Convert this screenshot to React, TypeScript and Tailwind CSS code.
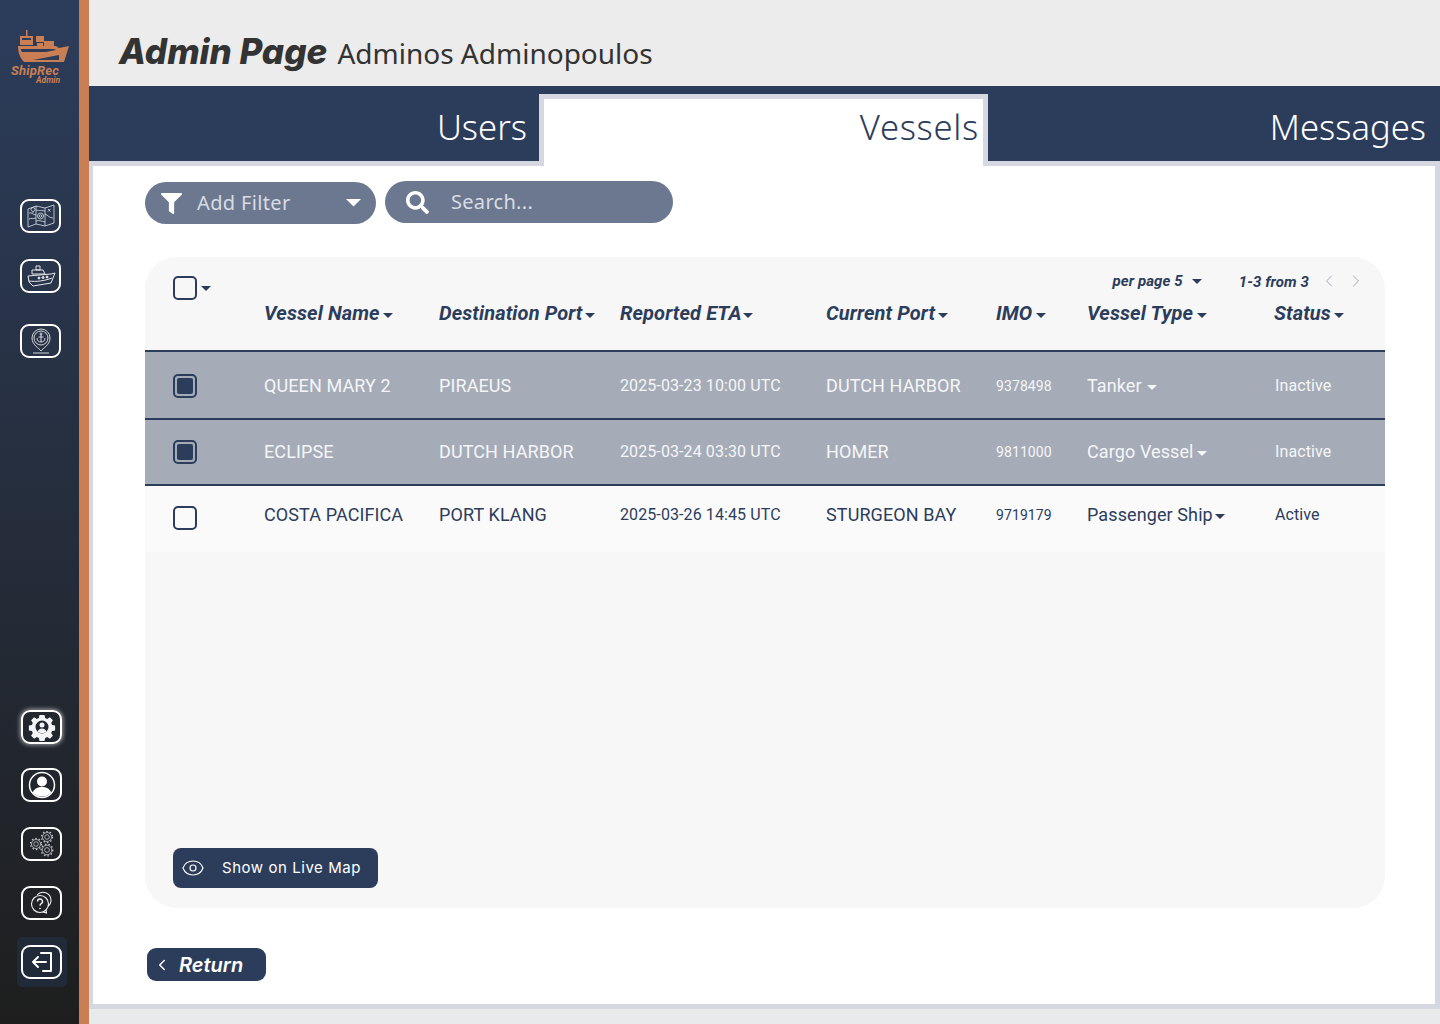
import { ChevronLeft, ChevronRight, Eye } from 'lucide-react'
import { FaFilter, FaSearch } from 'react-icons/fa'
import type { ReactNode } from 'react'

const roboto = 'font-["Roboto",sans-serif]'
const plex = 'font-["Noto_Sans",sans-serif]'

function Caret({ className = 'text-[#2c3d5c]', w = 10 }: { className?: string; w?: number }) {
  return (
    <svg width={w} height={w / 2} viewBox="0 0 10 5" className={`inline-block shrink-0 ${className}`}>
      <path d="M0 0h10L5 5z" fill="currentColor" />
    </svg>
  )
}

function SideButton({ children, glow }: { children: ReactNode; glow?: boolean }) {
  return (
    <div
      className={`flex h-[34px] w-[41px] items-center justify-center rounded-[9px] border-2 border-white ${
        glow ? 'shadow-[0_0_4px_1px_rgba(255,255,255,0.55)]' : ''
      }`}
    >
      {children}
    </div>
  )
}

function MapIcon() {
  return (
    <svg width="30" height="24" viewBox="0 0 30 24" fill="none" stroke="#dfe2e7" strokeWidth="0.8">
      <path d="M2 5l8-3 9 2 9-3v18l-9 3-9-2-8 3z" />
      <path d="M10 2v18M19 4v18" />
      <path d="M3 9c3-1 4 2 7 2M19 10c3 1 4 4 8 4M3 15c2-1 4 0 7-1M10 6c2 1 4 0 9 1M10 17c3-1 5 0 9 1" />
      <circle cx="14.500" cy="12" r="3" />
      <circle cx="14.500" cy="12" r="1.300" />
      <path d="M22 5l2.500 2.500M24.500 5L22 7.500M5 5.500l2 3 2-3a2 2 0 0 0-4 0z" />
    </svg>
  )
}

function ShipIcon() {
  return (
    <svg width="30" height="22" viewBox="0 0 30 22" fill="none" stroke="#e5e7eb" strokeWidth="1">
      <path d="M10 1h4v4h-4zM6 5h11l2 4H6z" />
      <path d="M2 11l23-2 4-1-4 10-18 3-4-4z" />
      <path d="M3 16c7 1 15 0 23-3" />
      <circle cx="13" cy="13" r="1" fill="#e5e7eb" />
      <circle cx="17" cy="12.500" r="1" fill="#e5e7eb" />
      <circle cx="21" cy="12" r="1" fill="#e5e7eb" />
    </svg>
  )
}

function AnchorPinIcon() {
  return (
    <svg width="26" height="28" viewBox="0 0 26 28" fill="none" stroke="#e5e7eb" strokeWidth="0.9">
      <path d="M13 24c-2-3-9-6-9-13a9 9 0 0 1 18 0c0 7-7 10-9 13z" />
      <circle cx="13" cy="11" r="7" />
      <circle cx="13" cy="7" r="1" />
      <path d="M13 8v7M10.500 10h5M9 11c0 3 2 4 4 4s4-1 4-4" />
      <path d="M5 26h16" />
    </svg>
  )
}

function GearUserIcon() {
  return (
    <svg width="28" height="28" viewBox="0 0 28 28">
      <path
        fill="#f3f4f6"
        fillRule="evenodd"
        d="M11.500 2h5l.7 3 2 .9 2.700-1.700 3 3-1.700 2.700.9 2 3 .7v4.800l-3 .7-.9 2 1.700 2.700-3 3-2.700-1.700-2 .9-.7 3h-5l-.7-3-2-.9-2.700 1.700-3-3 1.700-2.700-.9-2-3-.7v-4.800l3-.7.9-2-1.700-2.700 3-3 2.700 1.700 2-.9zM14 7.500a6.500 6.500 0 1 0 0 13 6.500 6.500 0 0 0 0-13z"
      />
      <circle cx="14" cy="12" r="2.500" fill="#f3f4f6" />
      <path d="M9.500 18.500c1-2 2.500-3 4.500-3s3.500 1 4.500 3c-2.500 2-6.500 2-9 0z" fill="#f3f4f6" />
    </svg>
  )
}

function UserCircleIcon() {
  return (
    <svg width="28" height="28" viewBox="0 0 28 28">
      <circle cx="14" cy="14" r="12.500" fill="none" stroke="#fff" strokeWidth="1.500" />
      <circle cx="14" cy="10.500" r="5" fill="#fff" />
      <path d="M4.800 21.500c1.500-4 5-5.500 9.200-5.500s7.700 1.500 9.200 5.500c-2.300 2.600-5.500 4-9.200 4s-6.900-1.400-9.200-4z" fill="#fff" />
    </svg>
  )
}

function Gear({ cx, cy, r }: { cx: number; cy: number; r: number }) {
  return (
    <g>
      <circle cx={cx} cy={cy} r={r} strokeDasharray="1.500 2" strokeWidth="1.300" />
      <circle cx={cx} cy={cy} r={r - 1} />
      <circle cx={cx} cy={cy} r={r / 2.400} />
    </g>
  )
}

function GearsIcon() {
  return (
    <svg width="26" height="26" viewBox="0 0 26 26" fill="none" stroke="#c5c8ce" strokeWidth="0.800">
      <Gear cx={7} cy={13} r={5.500} />
      <Gear cx={18} cy={6} r={5.500} />
      <Gear cx={18} cy={19} r={5.800} />
    </svg>
  )
}

function HelpIcon() {
  return (
    <svg width="24" height="24" viewBox="0 0 24 24" fill="none" stroke="#f3f4f6" strokeWidth="1.100">
      <path d="M7 4a8 8 0 0 1 14 5c0 3-1 5-3 6" />
      <circle cx="10" cy="13" r="8.500" />
      <path d="M13 21l3.500 1-.5-3.500" />
      <path d="M7.500 10.500a2.500 2.500 0 1 1 3.700 2.200c-.8.500-1.200 1-1.200 2" strokeWidth="1.400" />
      <circle cx="10" cy="17.500" r="0.800" fill="#f3f4f6" stroke="none" />
    </svg>
  )
}

function LogoutIcon() {
  return (
    <svg width="24" height="22" viewBox="0 0 24 22" fill="none" stroke="#fff" strokeWidth="2" strokeLinecap="round" strokeLinejoin="round">
      <path d="M11 2h10v18H13" />
      <path d="M16 11H3M8 6l-5 5 5 5" />
    </svg>
  )
}

function ShipLogo() {
  return (
    <svg width="52" height="34" viewBox="0 0 52 34" fill="#c97f53">
      <rect x="9" y="0" width="1.500" height="6" />
      <path d="M3 6h13v9H3zM5 8v2h9V8z" fillRule="evenodd" />
      <path d="M19 6h8v6h-8zM27 11h10v5H27zM20 13h6v3h-6z" />
      <path d="M1 16h38l3 2 10-2-5 16H7C4 29 1 24 1 16zM4 19c0 1 0 2 1 3h24l10-2-2-1z" fillRule="evenodd" />
      <path d="M16 30l26-5v5z" fill="#2c3d5c" />
    </svg>
  )
}

function Sidebar() {
  return (
    <aside className="flex h-full w-[79px] shrink-0 flex-col items-center bg-gradient-to-b from-[#2c3d5c] to-[#1e1e1e]">
      <div className="mt-[30px] flex w-full flex-col items-start pl-[17px]">
        <ShipLogo />
        <div className={`-ml-[6px] mt-[1px] text-[13px] leading-[11px] font-bold tracking-[0.2px] text-[#c97f53] italic ${roboto}`}>ShipRec</div>
        <div className={`ml-[19px] text-[8.500px] leading-[9px] font-bold text-[#c97f53] italic ${roboto}`}>Admin</div>
      </div>
      <div className="mt-[114px] flex flex-col items-center pl-[2px]">
        <SideButton><MapIcon /></SideButton>
        <div className="mt-[26px]"><SideButton><ShipIcon /></SideButton></div>
        <div className="mt-[31px]"><SideButton><AnchorPinIcon /></SideButton></div>
      </div>
      <div className="mt-[352px] flex flex-col items-center gap-[25px] pl-[4px]">
        <div className="-mb-[1px]"><SideButton glow><GearUserIcon /></SideButton></div>
        <SideButton><UserCircleIcon /></SideButton>
        <SideButton><GearsIcon /></SideButton>
        <SideButton><HelpIcon /></SideButton>
        <div className="-my-2 flex h-[50px] w-[50px] items-center justify-center rounded-[5px] bg-[#212a39]">
          <SideButton><LogoutIcon /></SideButton>
        </div>
      </div>
    </aside>
  )
}

function Tabs() {
  return (
    <div className={`flex h-[80px] bg-[#2c3d5c] text-[34.600px] font-light ${plex}`}>
      <div className="flex w-[450px] justify-end border-b-[5px] border-[#d5d8e0] pt-[16px] pr-[12px] leading-[50px] text-white">Users</div>
      <div className="mt-[8px] flex w-[449px] justify-end border-x-[5px] border-t-[5px] border-[#d5d8e0] bg-white pt-[3px] pr-[4px] leading-[50px] tracking-[0.7px] text-[#2c3d5c]">Vessels</div>
      <div className="flex flex-1 justify-end border-b-[5px] border-[#d5d8e0] pt-[16px] pr-[14px] leading-[50px] text-white">Messages</div>
    </div>
  )
}

const headers = [
  { label: 'Vessel Name', gap: 'gap-[3px]' },
  { label: 'Destination Port', gap: 'gap-[2px]' },
  { label: 'Reported ETA', gap: 'gap-[1px]' },
  { label: 'Current Port', gap: 'gap-[3px]' },
  { label: 'IMO', gap: 'gap-[4px]' },
  { label: 'Vessel Type', gap: 'gap-[4px]' },
  { label: 'Status', gap: 'gap-[3px]' },
]

const vessels = [
  { name: 'QUEEN MARY 2', dest: 'PIRAEUS', eta: '2025-03-23 10:00 UTC', port: 'DUTCH HARBOR', imo: '9378498', type: 'Tanker', status: 'Inactive', selected: true, h: 'h-[66px]', cell: '', box: 'pt-[2px]', small: 'pt-[2px]', gap: 'gap-[5px]' },
  { name: 'ECLIPSE', dest: 'DUTCH HARBOR', eta: '2025-03-24 03:30 UTC', port: 'HOMER', imo: '9811000', type: 'Cargo Vessel', status: 'Inactive', selected: true, h: 'h-[64px]', cell: 'pb-[2px]', box: '', small: '', gap: 'gap-[3px]' },
  { name: 'COSTA PACIFICA', dest: 'PORT KLANG', eta: '2025-03-26 14:45 UTC', port: 'STURGEON BAY', imo: '9719179', type: 'Passenger Ship', status: 'Active', selected: false, h: 'h-[66px]', cell: 'pb-[10px]', box: 'pb-[2px]', small: 'pb-[8px]', gap: 'gap-[2px]' },
]

const cols = 'grid grid-cols-[119px_175px_181px_206px_170px_91px_187px_111px]'

function Checkbox({ checked }: { checked?: boolean }) {
  return (
    <div className="flex h-6 w-6 items-center justify-center rounded-[5px] border-2 border-[#2c3d5c]">
      {checked && <div className="h-4 w-4 rounded-[2px] bg-[#2c3d5c]" />}
    </div>
  )
}

function Table() {
  return (
    <div className={`mr-[50px] ml-[52px] flex h-[651px] flex-col overflow-hidden rounded-[32px] bg-[#f7f7f7] text-[#2c3d5c] ${roboto}`}>
      <div className="relative h-[95px] shrink-0 border-b-2 border-[#2c3d5c]">
        <div className="flex items-center gap-[4px] pt-[19px] pl-[28px]">
          <Checkbox />
          <Caret />
        </div>
        <div className={`${cols} mt-[1px] text-[20px] leading-[24px] font-bold tracking-[0.1px] italic`}>
          <div />
          {headers.map((h) => (
            <div key={h.label} className={`flex items-center whitespace-nowrap ${h.gap}`}>
              {h.label}
              <Caret className="mt-[4px] text-[#2c3d5c]" />
            </div>
          ))}
        </div>
        <div className="absolute top-[14px] right-[19px] flex items-center text-[15px] leading-[18px] font-bold italic">
          <span className="tracking-[0.1px]">per page 5</span>
          <Caret className="mr-[37px] ml-[9px]" />
          <span className="pt-[2px] tracking-[0.1px]">1-3 from 3</span>
          <ChevronLeft size={20} strokeWidth={1.2} className="ml-[10px] text-[#a5acb8]" />
          <ChevronRight size={20} strokeWidth={1.2} className="ml-[7px] text-[#a5acb8]" />
        </div>
      </div>
      {vessels.map((v, i) => (
        <div
          key={v.name}
          className={`${cols} ${v.h} shrink-0 items-center text-[18px] tracking-[0.1px] ${
            v.selected ? 'bg-[#a5acb8] text-[#f5f6f7]' : 'bg-[#fafafa]'
          } ${i < 2 ? 'box-content border-b-2 border-[#2c3d5c]' : ''}`}
        >
          <div className={`pl-[28px] ${v.box}`}><Checkbox checked={v.selected} /></div>
          <div className={`whitespace-nowrap ${v.cell}`}>{v.name}</div>
          <div className={`whitespace-nowrap ${v.cell}`}>{v.dest}</div>
          <div className={`text-[16px] whitespace-nowrap ${v.small}`}>{v.eta}</div>
          <div className={`whitespace-nowrap ${v.cell}`}>{v.port}</div>
          <div className={`text-[14px] tracking-[0.1px] ${v.small}`}>{v.imo}</div>
          <div className={`flex items-center whitespace-nowrap ${v.gap} ${v.cell}`}>
            {v.type}
            <Caret className={`mt-[4px] ${v.selected ? 'text-[#f5f6f7]' : 'text-[#2c3d5c]'}`} />
          </div>
          <div className={`pl-[1px] text-[16px] ${v.small}`}>{v.status}</div>
        </div>
      ))}
      <div className="flex flex-1 items-end pb-[20px] pl-[28px]">
        <button className={`flex h-[40px] w-[205px] items-center rounded-[8px] bg-[#2c3d5c] pl-[8px] text-[15px] font-normal tracking-[0.55px] text-white font-["Inter",sans-serif]`}>
          <Eye size={24} strokeWidth={1.2} />
          <span className="ml-[17px]">Show on Live Map</span>
        </button>
      </div>
    </div>
  )
}

export default function App() {
  return (
    <div className="flex h-[1024px] w-[1440px] overflow-hidden bg-[#e9eaec]">
      <Sidebar />
      <div className="w-[10px] shrink-0 bg-[#c97f53]" />
      <main className="flex min-w-0 flex-1 flex-col">
        <header className="flex h-[86px] shrink-0 items-baseline bg-[#ececec] pt-[28px] pl-[30px] text-[#333333]">
          <h1 className={`text-[35px] leading-[46px] font-extrabold italic font-["Inter",sans-serif]`}>Admin Page</h1>
          <span className={`ml-[10px] text-[28px] ${plex}`}>Adminos Adminopoulos</span>
        </header>
        <Tabs />
        <div className="h-[843px] shrink-0 border-r-[5px] border-b-[5px] border-l-[4px] border-[#d5d8e0] bg-white pt-[15px]">
          <div className="flex items-start gap-[9px] pl-[52px] text-[20px] text-[#d9dce2]">
            <div className={`mt-[1px] flex h-[42px] w-[231px] items-center rounded-[21px] bg-[#6b7890] pr-[15px] pl-[16px] tracking-[0.35px] ${plex}`}>
              <FaFilter size={21} className="text-white" />
              <span className="ml-[15px] flex-1">Add Filter</span>
              <Caret className="text-white" w={15} />
            </div>
            <div className={`flex h-[42px] w-[288px] items-center rounded-[21px] bg-[#6b7890] pl-[21px] tracking-[0.3px] ${plex}`}>
              <FaSearch size={23} className="text-white" />
              <span className="ml-[22px]">Search...</span>
            </div>
          </div>
          <div className="mt-[33px]">
            <Table />
          </div>
          <div className="mt-[40px] pl-[54px]">
            <button className={`flex h-[33px] w-[119px] items-center rounded-[9px] bg-[#2c3d5c] pt-[1px] pl-[6px] text-[20px] font-semibold text-white italic font-["Inter",sans-serif]`}>
              <ChevronLeft size={18} strokeWidth={2} />
              <span className="ml-[8px]">Return</span>
            </button>
          </div>
        </div>
      </main>
    </div>
  )
}
